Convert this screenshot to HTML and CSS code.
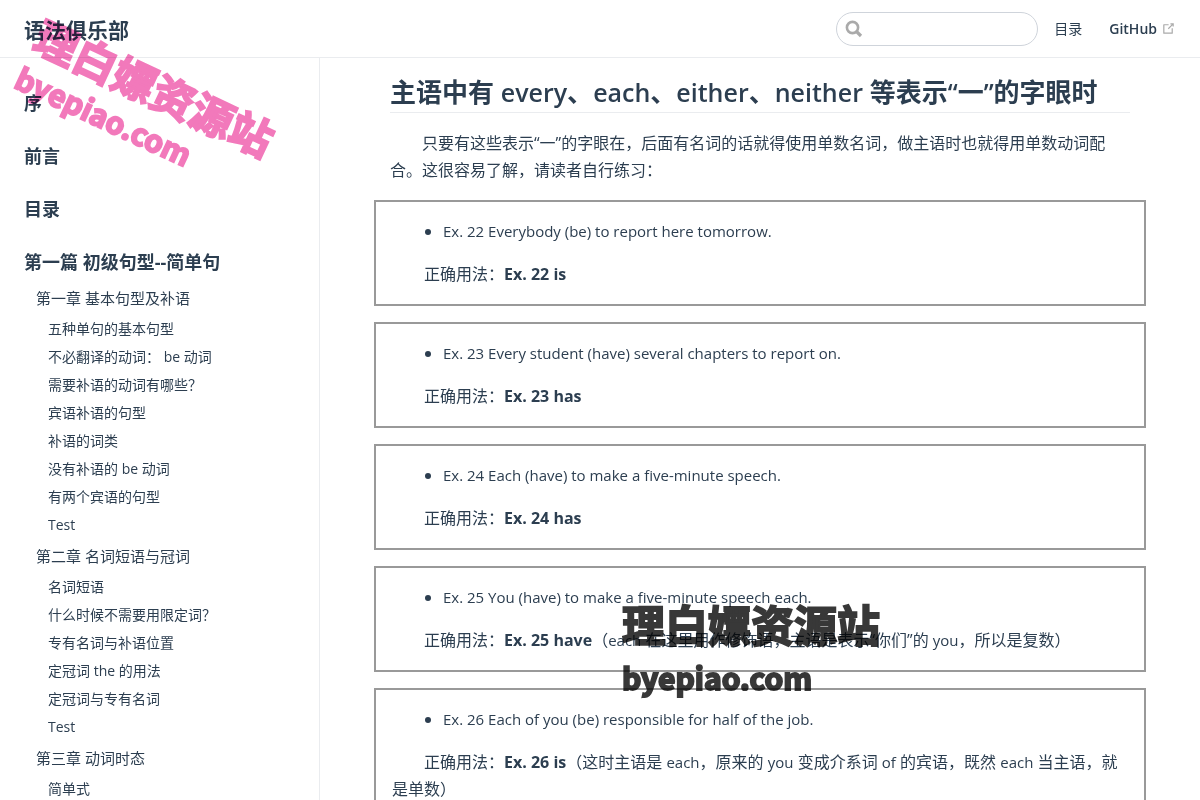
FILE: index.html
```html
<!DOCTYPE html>
<html lang="zh-CN">

<head>
    <meta charset="UTF-8">
    <meta name="viewport" content="width=device-width, initial-scale=1.0">
    <title>语法俱乐部</title>
    <link rel="stylesheet" href="styles.css">
</head>

<body>

    <header class="navbar">
        <a href="#" class="site-name">语法俱乐部</a>
        <div class="links">
            <div class="search-box">
                <svg class="search-icon" width="18" height="18" viewBox="0 0 18 18" fill="none" stroke="#aaa">
                    <circle cx="7.5" cy="7.5" r="5.6" stroke-width="2.6"/>
                    <path d="M11.5 11.5L16 16" stroke-width="3.2"/>
                </svg>
                <input type="text" aria-label="Search" autocomplete="off">
            </div>
            <a href="#" class="nav-link">目录</a>
            <a href="#" class="nav-link external">GitHub
                <svg class="outbound" width="15" height="15" viewBox="0 0 100 100" fill="#aaa">
                    <path d="M18.8 85.1h56c2.2 0 4-1.8 4-4v-32h-8v28h-48v-48h28v-8h-32c-2.2 0-4 1.8-4 4v56c0 2.2 1.8 4 4 4z"/>
                    <path d="M45.7 48.7L51.3 54.3 77.2 28.5 77.2 37.2 85.2 37.2 85.2 14.9 62.8 14.9 62.8 22.9 71.5 22.9z"/>
                </svg>
            </a>
        </div>
    </header>

    <div class="layout">
        <nav class="sidebar">
            <a href="#" class="heading">序</a>
            <a href="#" class="heading">前言</a>
            <a href="#" class="heading">目录</a>
            <a href="#" class="heading">第一篇 初级句型--简单句</a>

            <a href="#" class="chapter">第一章 基本句型及补语</a>
            <a href="#" class="item">五种单句的基本句型</a>
            <a href="#" class="item">不必翻译的动词： be 动词</a>
            <a href="#" class="item">需要补语的动词有哪些？</a>
            <a href="#" class="item">宾语补语的句型</a>
            <a href="#" class="item">补语的词类</a>
            <a href="#" class="item">没有补语的 be 动词</a>
            <a href="#" class="item">有两个宾语的句型</a>
            <a href="#" class="item">Test</a>

            <a href="#" class="chapter">第二章 名词短语与冠词</a>
            <a href="#" class="item">名词短语</a>
            <a href="#" class="item">什么时候不需要用限定词？</a>
            <a href="#" class="item">专有名词与补语位置</a>
            <a href="#" class="item">定冠词 the 的用法</a>
            <a href="#" class="item">定冠词与专有名词</a>
            <a href="#" class="item">Test</a>

            <a href="#" class="chapter">第三章 动词时态</a>
            <a href="#" class="item">简单式</a>
        </nav>

        <main class="page">
            <div class="content">
                <h2>主语中有 <span class="en">every</span>、<span class="en">each</span>、<span class="en">either</span>、<span class="en">neither</span> 等表示<span class="en">“</span>一<span class="en">”</span>的字眼时</h2>
                <p>只要有这些表示“一”的字眼在，后面有名词的话就得使用单数名词，做主语时也就得用单数动词配合。这很容易了解，请读者自行练习：</p>

                <div class="exercise">
                    <ul><li><span class="en">Ex. 22 Everybody (be) to report here tomorrow.</span></li></ul>
                    <p>正确用法：<strong>Ex. 22 is</strong></p>
                </div>
                <div class="exercise">
                    <ul><li><span class="en">Ex. 23 Every student (have) several chapters to report on.</span></li></ul>
                    <p>正确用法：<strong>Ex. 23 has</strong></p>
                </div>
                <div class="exercise">
                    <ul><li><span class="en">Ex. 24 Each (have) to make a five-minute speech.</span></li></ul>
                    <p>正确用法：<strong>Ex. 24 has</strong></p>
                </div>
                <div class="exercise">
                    <ul><li><span class="en">Ex. 25 You (have) to make a five-minute speech each.</span></li></ul>
                    <p>正确用法：<strong>Ex. 25 have</strong>（<span class="en">each</span> 在这里用作修饰语，主语是表示“你们”的 <span class="en">you</span>，所以是复数）</p>
                </div>
                <div class="exercise">
                    <ul><li><span class="en">Ex. 26 Each of you (be) responsible for half of the job.</span></li></ul>
                    <p>正确用法：<strong>Ex. 26 is</strong>（这时主语是 <span class="en">each</span>，原来的 <span class="en">you</span> 变成介系词 <span class="en">of</span> 的宾语，既然 <span class="en">each</span> 当主语，就是单数）</p>
                </div>
            </div>
        </main>
    </div>

    <div class="watermark pink">
        <div>理白嫖资源站</div>
        <div class="domain">byepiao.com</div>
    </div>
    <div class="watermark dark">
        <div>理白嫖资源站</div>
        <div class="domain">byepiao.com</div>
    </div>

</body>

</html>
```

FILE: styles.css
```css
* {
    box-sizing: border-box;
}

body {
    margin: 0;
    height: 100vh;
    overflow: hidden;
    display: flex;
    flex-direction: column;
    position: relative;
    font-family: "Open Sans", "Noto Sans CJK SC", sans-serif;
    font-size: 16px;
    color: #2c3e50;
    background-color: #fff;
}

a {
    color: inherit;
    text-decoration: none;
}

.navbar {
    flex: none;
    height: 58px;
    padding: 0 24px;
    display: flex;
    align-items: center;
    justify-content: space-between;
    border-bottom: 1px solid #eaecef;
}

.site-name {
    font-size: 21px;
    font-weight: 700;
}

.links {
    display: flex;
    align-items: center;
}

.search-box {
    position: relative;
    margin-right: 16px;
}

.search-box input {
    display: block;
    width: 202px;
    height: 34px;
    padding: 0 8px 0 32px;
    border: 1px solid #cfd4db;
    border-radius: 17px;
    font-size: 14px;
    outline: none;
}

.search-icon {
    position: absolute;
    left: 9px;
    top: 8px;
}

.nav-link {
    display: flex;
    align-items: center;
    gap: 4px;
    font-size: 14px;
    line-height: 20px;
}

.nav-link.external {
    margin-left: 27px;
    font-weight: 600;
}

.layout {
    flex: 1;
    min-height: 0;
    display: flex;
}

.sidebar {
    flex: none;
    width: 320px;
    padding-top: 26px;
    border-right: 1px solid #eaecef;
    overflow: hidden;
}

.sidebar a {
    display: block;
}

.sidebar .heading {
    padding-left: 24px;
    margin-bottom: 15px;
    font-size: 18px;
    line-height: 38px;
    font-weight: 700;
}

.sidebar .heading + .chapter {
    margin-top: -15px;
}

.sidebar .chapter {
    padding-left: 36px;
    font-size: 15px;
    line-height: 34px;
}

.sidebar .item {
    padding-left: 48px;
    font-size: 14px;
    line-height: 28px;
}

.page {
    flex: 1;
    min-width: 0;
    overflow: hidden;
}

.content {
    max-width: 740px;
    margin: 0 auto;
    line-height: 27px;
}

h2 {
    margin: 0 0 17px;
    padding: 16px 0 2px;
    font-size: 26px;
    line-height: 36px;
    font-weight: 700;
    border-bottom: 1px solid #eaecef;
}

/* latin text runs wide next to the chinese */
h2 .en {
    font-size: 25px;
    font-weight: 600;
}

.exercise .en {
    font-size: 15px;
}

p {
    margin: 0;
    text-indent: 32px;
}

.exercise {
    margin: 16px -16px;
    padding: 16px;
    border: 2px solid #999;
}

.exercise ul {
    margin: 0 0 16px;
    padding-left: 51px;
}

.watermark {
    position: absolute;
    font-family: "Noto Sans CJK SC", sans-serif;
    font-size: 43px;
    line-height: 54px;
    font-weight: 700;
    white-space: nowrap;
    mix-blend-mode: multiply;
    pointer-events: none;
    -webkit-text-stroke: 2px;
}

.watermark .domain {
    font-size: 30px;
}

.pink {
    left: 16px;
    top: 60px;
    color: #f279bb;
    line-height: 48px;
    transform: rotate(25deg);
}

.dark {
    left: 622px;
    top: 596px;
    color: #383838;
}
```
